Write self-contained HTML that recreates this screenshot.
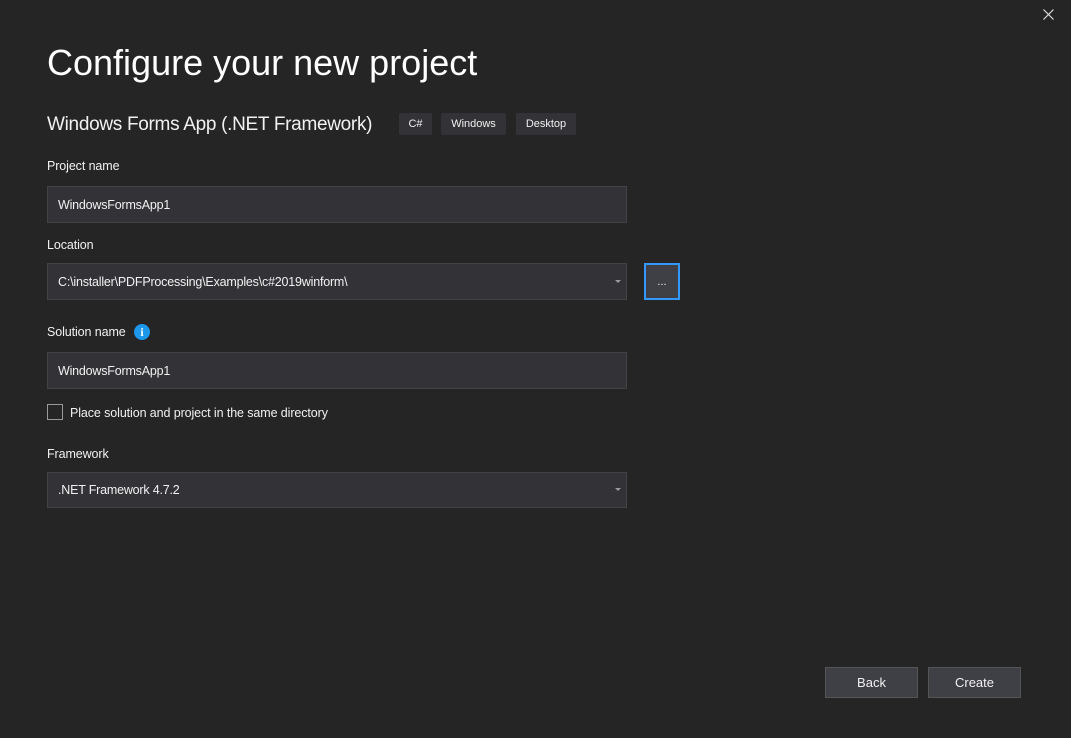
<!DOCTYPE html>
<html><head><style>
body{margin:0;width:1071px;height:738px;background:#252526;font-family:"Liberation Sans",sans-serif;color:#f1f1f1;position:relative;overflow:hidden}
.a{position:absolute}
.lbl{font-size:12.5px;color:#f1f1f1;letter-spacing:-0.1px}
.inp{position:absolute;left:47px;width:580px;background:#333337;border:1px solid #434346;font-size:12.5px;letter-spacing:-0.2px;box-sizing:border-box;padding-left:10px;display:flex;align-items:center}
.tag{position:absolute;top:113px;height:22px;background:#333337;border-radius:2px;font-size:11px;display:flex;align-items:center;justify-content:center}
.arr{position:absolute;right:5px;top:50%;margin-top:-2px;border-left:3px solid transparent;border-right:3px solid transparent;border-top:3px solid #999}
.btn{position:absolute;top:667px;width:93px;height:31px;background:#3f3f46;border:1px solid #555;box-sizing:border-box;font-size:13px;display:flex;align-items:center;justify-content:center}
</style></head><body>
<svg class="a" style="left:1043px;top:9px" width="11" height="11"><path d="M0.5 0.5L10.5 10.5M10.5 0.5L0.5 10.5" stroke="#ddd" stroke-width="1.2"/></svg>
<div class="a" style="left:47px;top:42px;font-size:36px;color:#fff">Configure your new project</div>
<div class="a" style="left:47px;top:114px;font-size:19px;letter-spacing:-0.3px">Windows Forms App (.NET Framework)</div>
<div class="tag" style="left:399px;width:33px">C#</div>
<div class="tag" style="left:441px;width:65px">Windows</div>
<div class="tag" style="left:516px;width:60px">Desktop</div>
<div class="a lbl" style="left:47px;top:159px">Project name</div>
<div class="inp" style="top:186px;height:37px">WindowsFormsApp1</div>
<div class="a lbl" style="left:47px;top:238px">Location</div>
<div class="inp" style="top:263px;height:37px">C:\installer\PDFProcessing\Examples\c#2019winform\<span class="arr"></span></div>
<div class="a" style="left:644px;top:263px;width:36px;height:37px;box-sizing:border-box;background:#3f3f46;border:2px solid #3399ff;font-size:11px;display:flex;align-items:center;justify-content:center">...</div>
<div class="a lbl" style="left:47px;top:325px">Solution name</div>
<div class="a" style="left:134px;top:324px;width:16px;height:16px;border-radius:50%;background:#1c97ea;color:#fff;font-size:12px;font-weight:bold;text-align:center;line-height:16px;font-family:'Liberation Serif',serif">i</div>
<div class="inp" style="top:352px;height:37px">WindowsFormsApp1</div>
<div class="a" style="left:47px;top:404px;width:16px;height:16px;box-sizing:border-box;border:1px solid #999"></div>
<div class="a lbl" style="left:70px;top:406px">Place solution and project in the same directory</div>
<div class="a lbl" style="left:47px;top:447px">Framework</div>
<div class="inp" style="top:472px;height:36px">.NET Framework 4.7.2<span class="arr"></span></div>
<div class="btn" style="left:825px">Back</div>
<div class="btn" style="left:928px">Create</div>
</body></html>
